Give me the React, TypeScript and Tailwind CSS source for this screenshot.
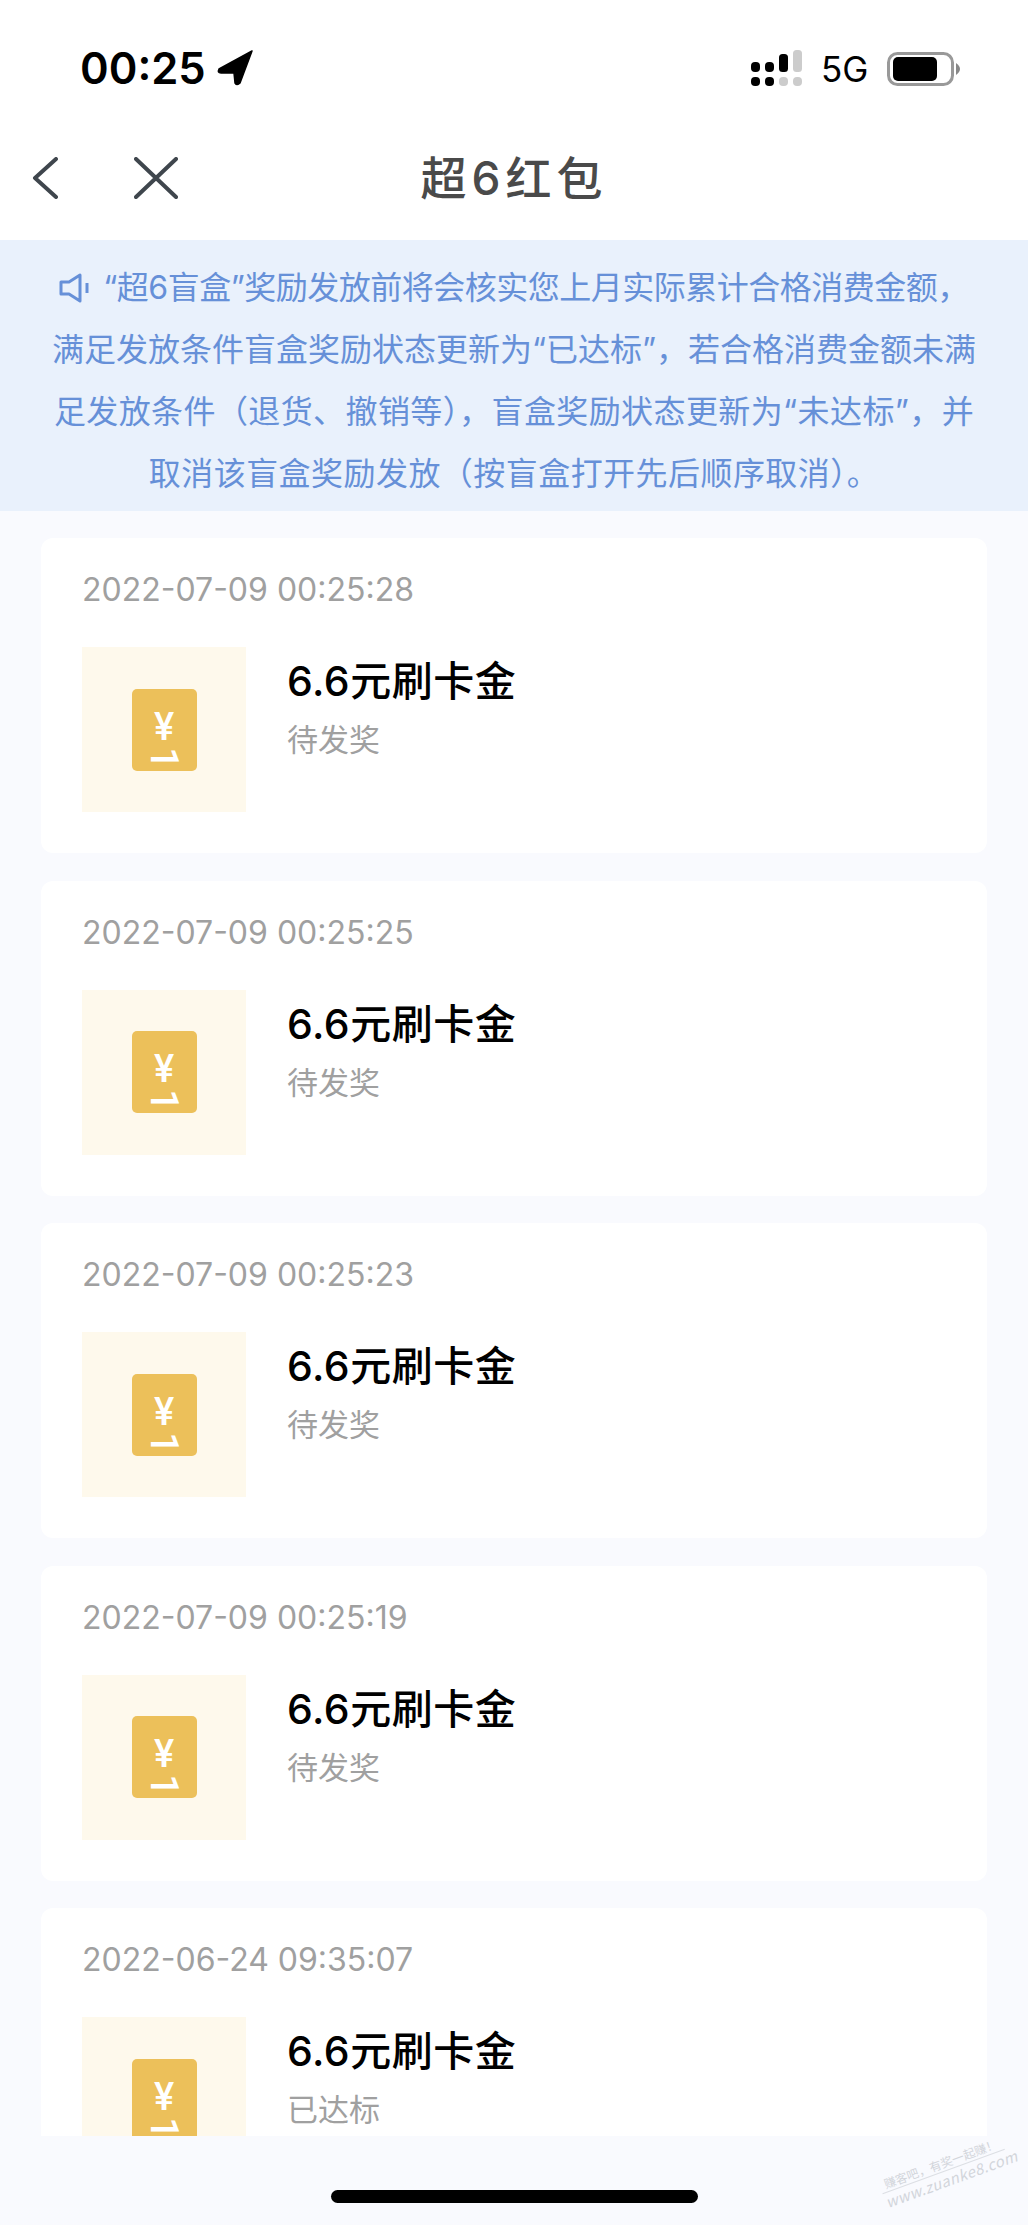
const rows = [
  { date: "2022-07-09 00:25:28", status: "待发奖" },
  { date: "2022-07-09 00:25:25", status: "待发奖" },
  { date: "2022-07-09 00:25:23", status: "待发奖" },
  { date: "2022-07-09 00:25:19", status: "待发奖" },
  { date: "2022-06-24 09:35:07", status: "已达标" },
];

const cjk = "font-['Inter','Noto_Sans_CJK_SC',sans-serif]";

const StatusBar = () => (
  <div className={`flex h-[115px] items-start justify-between pl-[80px] pr-[68px] pt-[42px] text-black ${cjk}`}>
    <div className="flex items-center gap-[11px]">
      <span className="text-[43.5px] font-semibold leading-[52px]">00:25</span>
      <svg width="36" height="36" viewBox="0 0 36 36">
        <path d="M35 1 L2 19 Q0 23 4 23 L17 23 L18 33 Q20 36 23 33 Z" fill="#000" stroke="#000" strokeWidth="1.5" strokeLinejoin="round" />
      </svg>
    </div>
    <div className="mt-[8px] flex items-center">
      <svg width="52" height="38" viewBox="0 0 52 38">
        <rect x="0" y="12" width="9" height="10" rx="4" fill="#000" />
        <rect x="14" y="12" width="9" height="10" rx="4" fill="#000" />
        <rect x="28" y="4" width="9" height="18" rx="3.5" fill="#000" />
        <rect x="42" y="0" width="9" height="22" rx="3.5" fill="#ccc" />
        <rect x="0" y="27" width="9" height="9" rx="4" fill="#000" />
        <rect x="14" y="27" width="9" height="9" rx="4" fill="#000" />
        <rect x="28" y="27" width="9" height="9" rx="4" fill="#ccc" />
        <rect x="42" y="27" width="9" height="9" rx="4" fill="#ccc" />
      </svg>
      <span className="ml-[18px] w-[48px] text-[35px] leading-[36px]">5G</span>
      <svg className="ml-[18px]" width="73" height="34" viewBox="0 0 73 34">
        <rect x="1.5" y="1.5" width="64" height="31" rx="9" fill="none" stroke="#999" strokeWidth="3" />
        <rect x="6" y="5" width="44" height="24" rx="5" fill="#000" />
        <path d="M69 11 Q73 14 73 17 Q73 20 69 23 Z" fill="#888" />
      </svg>
    </div>
  </div>
);

const NavBar = () => (
  <div className="relative flex h-[125px] items-start pl-[32px] pt-[42px]">
    <svg width="26" height="42" viewBox="0 0 26 42" fill="none" stroke="#3f464d" strokeWidth="4" strokeLinecap="round" strokeLinejoin="round">
      <path d="M24 2 L3 21 L24 40" />
    </svg>
    <svg className="ml-[76px]" width="44" height="42" viewBox="0 0 44 42" fill="none" stroke="#3f464d" strokeWidth="4" strokeLinecap="round">
      <path d="M2 2 L42 40 M42 2 L2 40" />
    </svg>
    <div className={`absolute left-0 right-0 top-[37px] text-center text-[46px] font-medium leading-[52px] tracking-[5px] text-[#4a4a4a] ${cjk}`}>
      超6红包
    </div>
  </div>
);

const Notice = () => (
  <div className={`h-[271px] bg-[#e9f1fc] pt-[17px] text-center text-[32px] leading-[62px] text-[#6690d8] ${cjk}`}>
    <div className="flex items-center justify-center">
      <svg className="mr-[14px]" width="30" height="30" viewBox="0 0 30 30" fill="none" stroke="#6690d8" strokeWidth="3" strokeLinejoin="round">
        <path d="M2 9 L10 9 L21 2 L21 28 L10 21 L2 21 Z" />
        <path d="M28 10 L28 20" />
      </svg>
      <span className="tracking-[-0.5px]">“超6盲盒”奖励发放前将会核实您上月实际累计合格消费金额，</span>
    </div>
    <div>满足发放条件盲盒奖励状态更新为“已达标”，若合格消费金额未满</div>
    <div className="tracking-[0.4px]">足发放条件（退货、撤销等），盲盒奖励状态更新为“未达标”，并</div>
    <div className="tracking-[0.45px]">取消该盲盒奖励发放（按盲盒打开先后顺序取消）。</div>
  </div>
);

const Thumb = () => (
  <div className="flex h-[165px] w-[164px] shrink-0 items-center justify-center bg-[#fef9ec]">
    <div className="flex h-[82px] w-[65px] flex-col items-center overflow-hidden rounded-[5px] bg-[#ecc05a] font-['Roboto',sans-serif] text-white">
      <span className="mt-[20px] h-[36px] text-[38px] font-medium leading-[36px]">¥</span>
      <span className="mt-[3px] h-[20px] rotate-90 text-[38px] font-medium leading-[20px]">1</span>
    </div>
  </div>
);

const Card = ({ date, status }: { date: string; status: string }) => (
  <div className={`h-[315px] shrink-0 rounded-[12px] bg-white pl-[41px] pt-[34px] ${cjk}`}>
    <div className="text-[32px] leading-[36px] text-[#a0a0a0]">{date}</div>
    <div className="mt-[39px] flex">
      <Thumb />
      <div className="ml-[41px] pt-[9px]">
        <div className="text-[41px] font-medium leading-[50px] tracking-[0.5px] text-black">6.6元刷卡金</div>
        <div className="mt-[14px] text-[31px] leading-[40px] text-[#a0a0a0]">{status}</div>
      </div>
    </div>
  </div>
);

export default function App() {
  return (
    <div className="relative flex h-[2225px] w-[1028px] flex-col overflow-hidden bg-[#f9fafe]">
      <div className="bg-white">
        <StatusBar />
        <NavBar />
      </div>
      <Notice />
      <div className="flex h-[1625px] flex-col gap-[27.5px] overflow-hidden px-[41px] pt-[27px]">
        {rows.map((r) => (
          <Card key={r.date} date={r.date} status={r.status} />
        ))}
      </div>
      <div className="flex flex-1 justify-center pt-[54px]">
        <div className="h-[13px] w-[367px] rounded-full bg-black" />
      </div>
      <div className="absolute left-[879px] top-[2154px] w-[130px] -rotate-[20deg] text-center font-['Noto_Sans_CJK_SC',sans-serif] text-[#d2d5db]">
        <div className="absolute left-0 right-0 top-[17px] h-px bg-[#dcdfe4]" />
        <p className="text-[12px] leading-[18px]">
          赚客吧，有奖一起赚！
          <br />
          <span className="text-[15px] italic tracking-[0.5px]">www.zuanke8.com</span>
        </p>
      </div>
    </div>
  );
}
